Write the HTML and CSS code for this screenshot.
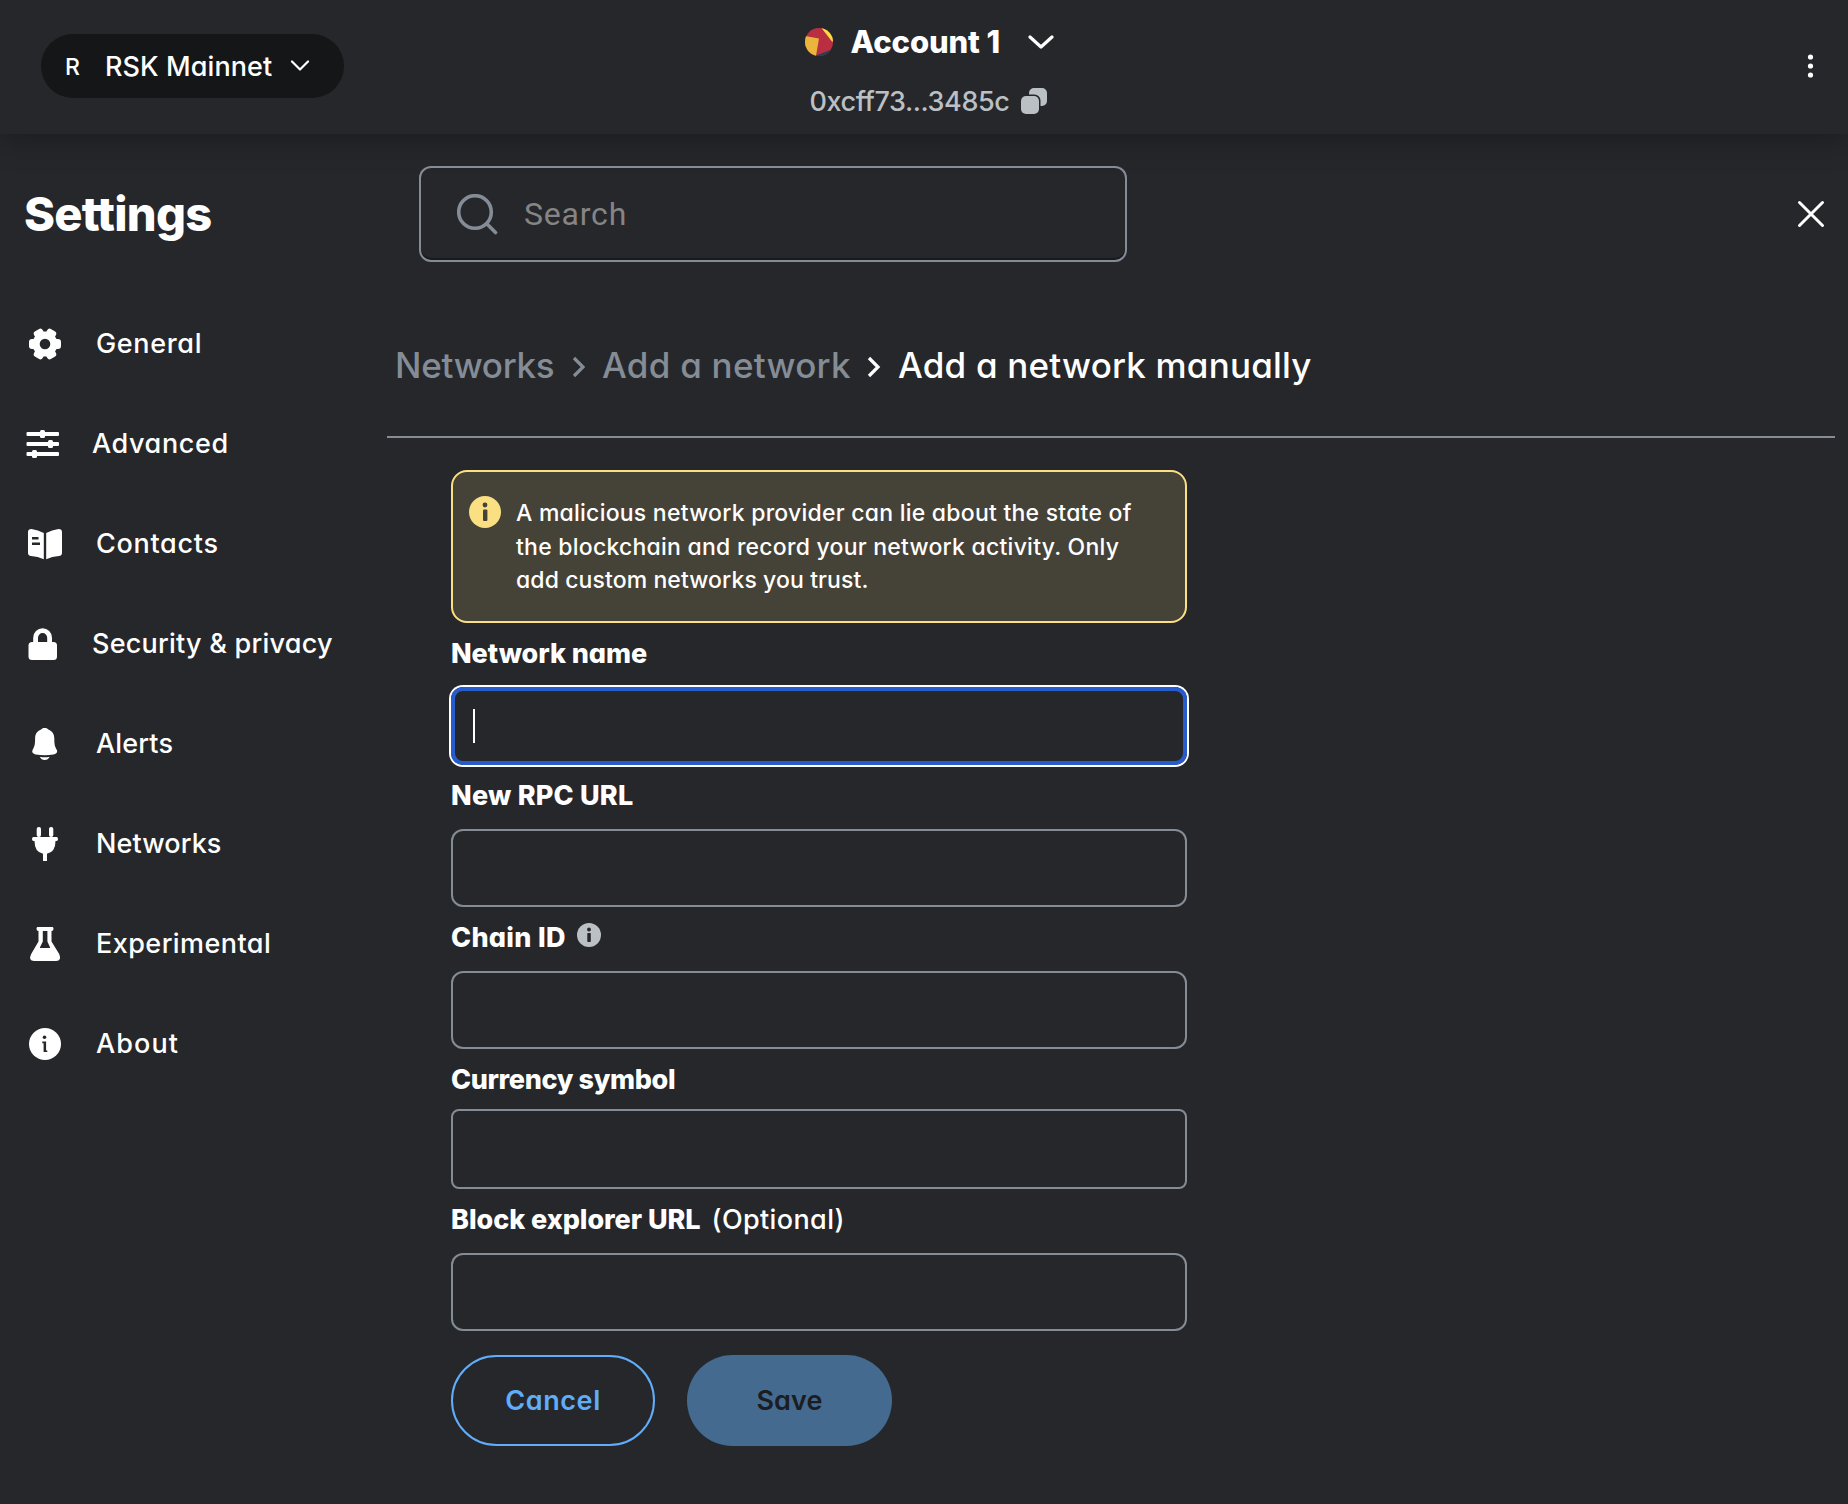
FILE: index.html
```html
<!DOCTYPE html>
<html lang="en">
<head>
<meta charset="utf-8">
<title>Settings</title>
<link rel="stylesheet" href="styles.css">
</head>
<body>
<header class="topbar">
  <button class="network-pill"><span class="pill-letter">R</span><span class="pill-name">RSK Mainnet</span>
    <svg class="pill-chevron" width="20" height="12" viewBox="0 0 20 12"><path d="M2 1.5l8 8 8-8"/></svg></button>
  <div class="account">
    <div class="account-row">
      <svg width="28" height="28" viewBox="0 0 28 28"><defs><clipPath id="avatar"><circle cx="14" cy="14" r="14"/></clipPath></defs><g clip-path="url(#avatar)"><path fill="#b92f41" d="M0 0h28v28H0z"/><path fill="#e9b53c" d="M0 8l14 2.500L11 28H0z"/><path fill="#fbdc45" d="M16.500 0h12v14l-1.500-.5z"/><path fill="#20435a" d="M11 27.500L28 21v7H11z"/></g></svg>
      <span class="account-name">Account 1</span>
      <svg class="account-chevron" width="26" height="14" viewBox="0 0 26 14"><path d="M2 2l11 10L24 2"/></svg>
    </div>
    <div class="address-row"><span class="address">0xcff73...3485c</span>
      <svg width="26" height="26" viewBox="0 0 26 26"><path fill="#bbc0c5" d="M13 0h8a5 5 0 0 1 5 5v8a5 5 0 0 1-5 5h-1.500v-5.500a6 6 0 0 0-6-6H8V5a5 5 0 0 1 5-5z"/><rect y="8" width="18" height="18" rx="5" fill="#bbc0c5"/></svg>
    </div>
  </div>
  <svg class="menu-dots" width="13" height="26" viewBox="0 0 13 26"><circle cx="6.500" cy="4" r="2.600"/><circle cx="6.500" cy="13" r="2.600"/><circle cx="6.500" cy="22" r="2.600"/></svg>
</header>
<main class="settings">
  <aside class="sidebar">
    <h1 class="page-title">Settings</h1>
    <nav class="tabs">
      <a class="tab tab-general"><svg width="38" height="38" viewBox="0 0 38 38"><rect x="3" y="14" width="32" height="10" rx="3"/><rect x="3" y="14" width="32" height="10" rx="3" transform="rotate(60 19 19)"/><rect x="3" y="14" width="32" height="10" rx="3" transform="rotate(120 19 19)"/><circle cx="19" cy="19" r="12.500"/><circle class="cut" cx="19" cy="19" r="5.300"/></svg><span class="tab-label">General</span></a>
      <a class="tab tab-advanced"><svg width="34" height="38" viewBox="0 0 34 38"><rect x=".5" y="7" width="32.500" height="4" rx="1"/><rect x=".5" y="17" width="32.500" height="4" rx="1"/><rect x=".5" y="27" width="32.500" height="4" rx="1"/><rect x="14" y="5" width="5" height="8" rx="1.500"/><rect x="22" y="15" width="5" height="8" rx="1.500"/><rect x="6" y="25" width="5" height="8" rx="1.500"/></svg><span class="tab-label">Advanced</span></a>
      <a class="tab tab-contacts"><svg width="38" height="38" viewBox="0 0 38 38"><path d="M2 7q0-3 3.500-3Q12 5 17.800 8v26.300Q12 31.500 5 31q-3-.3-3-3zM36 7q0-3-3.500-3Q26 5 20.200 8v26.300Q26 31.500 33 31q3-.3 3-3z"/><path class="cut" d="M6 12h6.500v2.500H6zM6 17.500h8V20H6z"/></svg><span class="tab-label">Contacts</span></a>
      <a class="tab tab-security"><svg width="34" height="38" viewBox="0 0 34 38"><rect x="2.500" y="17" width="28.500" height="18" rx="3.500"/><path class="stroke" stroke-width="4.800" d="M9.600 19v-6.300a7 7 0 0 1 14 0V19"/></svg><span class="tab-label">Security &amp; privacy</span></a>
      <a class="tab tab-alerts"><svg width="38" height="38" viewBox="0 0 38 38"><path d="M18.700 3c2 0 3 .7 3.600 1.500 4.200 1.500 6 4.800 6 9 0 6 .6 8 2.300 11 1.500 3-.3 4.300-3.200 4.900-5.500 1.100-12 1.100-17.500 0-2.900-.6-4.600-2-3.100-4.900 1.700-3 2.300-5 2.300-11 0-4.200 1.800-7.500 6-9C15.700 3.700 16.700 3 18.700 3zM13.700 31.800c3.300.7 6.700.7 10 0-1 2-2.700 3.300-5 3.300s-4-1.300-5-3.300z"/></svg><span class="tab-label">Alerts</span></a>
      <a class="tab tab-networks"><svg width="38" height="38" viewBox="0 0 38 38"><rect x="10.700" y="2" width="4.300" height="10" rx="2"/><rect x="23" y="2" width="4.300" height="10" rx="2"/><path d="M7.500 12h23q1.500 0 1.500 2t-1.500 2h-1q0 11-8.500 12.700V36h-4v-7.300Q8.500 27 8.500 16h-1Q6 16 6 14t1.500-2z"/></svg><span class="tab-label">Networks</span></a>
      <a class="tab tab-experimental"><svg width="38" height="38" viewBox="0 0 38 38"><path d="M11.500 2h15q1 0 1 2t-2 2v10.500l7.700 12.500q2.800 7-3 7H8.200q-6.400 0-3-7l7.300-12.500V6q-2 0-2-2t1-2z"/><path class="cut" d="M16.800 6h4.600v10.500l2.600 5.800v.7H14v-.7l2.800-5.800z"/></svg><span class="tab-label">Experimental</span></a>
      <a class="tab tab-about"><svg width="38" height="38" viewBox="0 0 38 38"><circle cx="19" cy="19" r="16"/><circle class="cut" cx="18.500" cy="12.300" r="1.800"/><path class="cut" d="M16.300 16.500h3.800v9h1.200V27h-3.700v-8.800h-1.300z"/></svg><span class="tab-label">About</span></a>
    </nav>
  </aside>
  <section class="content">
    <div class="search-row">
      <div class="search"><svg width="41" height="41" viewBox="0 0 41 41"><circle cx="18" cy="18" r="16.300"/><path d="M30 30l8.500 8.500"/></svg><span class="search-text">Search</span></div>
      <svg class="close" width="28" height="28" viewBox="0 0 28 28"><path d="M2.500 2.500l23 23M25.500 2.500l-23 23"/></svg>
    </div>
    <div class="breadcrumbs">
      <span class="crumb crumb-root">Networks</span>
      <svg class="sep" width="16" height="22" viewBox="0 0 16 22"><path d="M3 2l9 9-9 9"/></svg>
      <span class="crumb crumb-parent">Add a network</span>
      <svg class="sep sep-current" width="16" height="22" viewBox="0 0 16 22"><path d="M3 2l9 9-9 9"/></svg>
      <span class="crumb crumb-current">Add a network manually</span>
    </div>
    <form class="form">
      <div class="banner"><svg width="32" height="32" viewBox="0 0 32 32"><circle cx="16" cy="16" r="16" fill="#fae082"/><circle cx="16" cy="9" r="2.400" fill="#454237"/><rect x="14" y="13.500" width="4.400" height="11.500" rx="1" fill="#454237"/></svg>
        <p class="banner-text">A malicious network provider can lie about the state of<br>the blockchain and record your network activity. Only<br><span class="banner-last">add custom networks you trust.</span></p></div>
      <div class="field"><div class="label"><b>Network name</b></div><div class="input input-focus"><i class="caret"></i></div></div>
      <div class="field field-rpc"><div class="label"><b>New RPC URL</b></div><div class="input"></div></div>
      <div class="field field-chain"><div class="label"><b>Chain ID</b><svg class="hint" width="24" height="24" viewBox="0 0 24 24"><circle cx="12" cy="12" r="12" fill="#bbc0c5"/><circle cx="12" cy="6.500" r="1.900" fill="#26272b"/><rect x="10.300" y="10" width="3.500" height="9" rx=".8" fill="#26272b"/></svg></div><div class="input"></div></div>
      <div class="field field-currency"><div class="label"><b>Currency symbol</b></div><div class="input input-select"></div></div>
      <div class="field"><div class="label"><b>Block explorer URL</b><span class="optional">(Optional)</span></div><div class="input"></div></div>
      <div class="actions"><button type="button" class="btn btn-cancel">Cancel</button><button type="button" class="btn btn-save">Save</button></div>
    </form>
  </section>
</main>
</body>
</html>
```
FILE: styles.css
```css
* { box-sizing: border-box; }
body {
  margin: 0;
  min-height: 1504px;
  background: #26272b;
  color: #fff;
  font-family: Inter, "Open Sans", sans-serif;
  font-size: 27px;
  font-weight: 450;
  font-feature-settings: "cv11";
  white-space: nowrap;
}
svg { display: block; flex: none; fill: currentColor; }
button { font: inherit; font-feature-settings: inherit; color: inherit; border: 0; padding: 0; }
.cut { fill: #26272b; }
.stroke { fill: none; stroke: currentColor; }

/* Top bar */
.topbar {
  display: grid;
  grid-template-columns: 1fr auto 1fr;
  align-items: center;
  height: 134px;
  padding: 0 31px 2px 41px;
  box-shadow: 0 4px 32px rgba(0, 0, 0, .3);
}
.network-pill {
  display: flex;
  align-items: center;
  width: 303px;
  height: 64px;
  padding-left: 24px;
  border-radius: 32px;
  background: #151618;
}
.pill-letter { width: 40px; text-align: left; font-size: 23px; padding-top: 2px; }
.pill-name { width: 185px; text-align: left; letter-spacing: .08px; }
.pill-chevron path, .account-chevron path { fill: none; stroke: #fff; stroke-width: 2.2; stroke-linecap: round; stroke-linejoin: round; }
.account-chevron path { stroke-width: 3.2; }
.account { align-self: start; padding-top: 20px; }
.account-row { display: flex; align-items: center; height: 44px; width: 249px; }
.account-name { width: 179px; margin-left: 18px; padding-bottom: 2px; font-size: 31px; font-weight: 800; letter-spacing: -.12px; }
.address-row { display: flex; align-items: center; height: 40px; margin: 17px 0 0 5px; color: #bbc0c5; }
.address { width: 211px; letter-spacing: -.4px; }
.menu-dots { justify-self: end; }

/* Sidebar */
.settings { display: grid; grid-template-columns: 387px 1fr; }
.page-title { margin: 0; padding: 50px 0 0 24px; height: 160px; font-size: 47px; line-height: 60px; font-weight: 800; letter-spacing: -.75px; }
.tab { display: flex; align-items: center; gap: 32px; height: 100px; padding-left: 26px; }
.tab-label { padding-bottom: 2px; }
.tab-general { letter-spacing: .65px; }
.tab-advanced { letter-spacing: .6px; }
.tab-contacts { letter-spacing: .7px; }
.tab-security { letter-spacing: .23px; }
.tab-alerts { letter-spacing: .15px; }
.tab-networks { letter-spacing: .1px; }
.tab-experimental { letter-spacing: .44px; }
.tab-about { letter-spacing: 1.1px; }

/* Search and breadcrumbs */
.content { padding-top: 32px; }
.search-row { display: flex; justify-content: space-between; align-items: center; padding: 0 23px 0 32px; }
.search {
  display: flex;
  align-items: center;
  gap: 26px;
  width: 708px;
  height: 96px;
  padding-left: 36px;
  border: 2px solid #848c96;
  border-radius: 12px;
  box-shadow: inset 0 -2px #191a1d;
}
.search svg { fill: none; stroke: #848c96; stroke-width: 3.6; stroke-linecap: round; }
.search-text { font-family: Roboto, sans-serif; font-size: 32px; font-weight: 400; color: #858585; letter-spacing: .8px; }
.close path { stroke: #fff; stroke-width: 3; stroke-linecap: round; }

.breadcrumbs {
  display: flex;
  align-items: center;
  height: 176px;
  padding: 36px 0 4px 8px;
  margin-right: 13px;
  border-bottom: 2px solid #848c96;
  font-size: 35px;
  color: #848c96;
}
.crumb-root { width: 176px; letter-spacing: -.28px; }
.crumb-parent { width: 264px; letter-spacing: .25px; }
.crumb-current { color: #fff; letter-spacing: .2px; }
.sep { margin: 4px 16px 0 0; fill: none; stroke: currentColor; stroke-width: 3.2; }
.sep:first-of-type { margin-right: 15px; }
.sep.sep-current { margin-right: 16px; color: #fff; }

/* Network form */
.form { width: 800px; padding: 32px 0 0 64px; }
.banner {
  display: flex;
  gap: 15px;
  width: 736px;
  height: 153px;
  padding: 24px 16px;
  border: 2px solid #fae082;
  border-radius: 16px;
  background: #454237;
}
.banner-text { margin: 1px 0 0; font-size: 23px; line-height: 33.6px; letter-spacing: .24px; }
.banner-last { letter-spacing: .1px; }
.field { padding-top: 10px; }
.label { display: flex; align-items: center; height: 40px; margin-bottom: 14px; }
.label b { padding-top: 1px; font-weight: 800; letter-spacing: -.05px; }
.field-rpc b { letter-spacing: .22px; }
.field-chain b { letter-spacing: .3px; }
.field-currency b { letter-spacing: -.36px; }
.hint { margin: -4px 0 0 11px; }
.optional { margin-left: 11px; padding-top: 1px; letter-spacing: .38px; }
.input { width: 736px; height: 78px; border: 2px solid #848c96; border-radius: 12px; }
.input-focus { padding: 18px; border: 4px solid #265ccb; box-shadow: 0 0 0 2px #fff; }
.input-select { height: 80px; margin-top: -4px; border-radius: 8px; }
.caret { display: block; width: 2px; height: 34px; background: #fff; }
.actions { display: flex; gap: 32px; padding-top: 24px; }
.btn { width: 204px; height: 91px; border-radius: 46px; font-weight: 600; background: none; }
.btn-cancel { border: 2px solid #60adf9; color: #60adf9; letter-spacing: .6px; }
.btn-save { width: 205px; background: #446a90; color: #1b1d20; letter-spacing: .1px; }
```
